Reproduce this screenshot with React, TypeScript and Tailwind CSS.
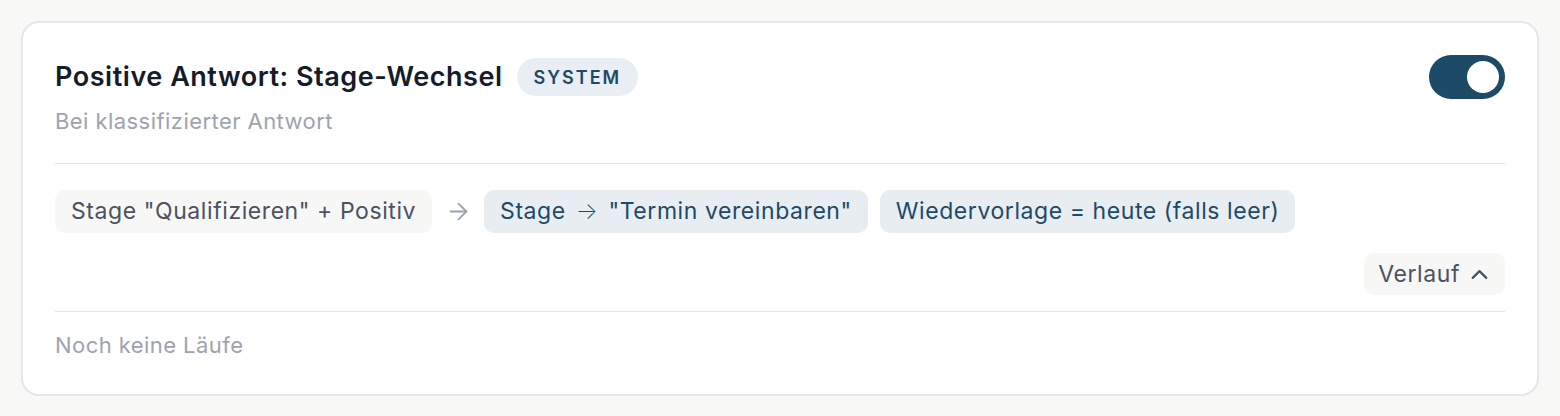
import { ArrowRight, ChevronUp } from 'lucide-react';

export default function App() {
    return (
        <div className="min-h-screen bg-[#f8f8f6] p-[21px] font-['Inter','Noto_Sans',sans-serif]">
            <div className="rounded-[18px] border-2 border-[#e6e6eb] bg-white px-8 pt-8 pb-[34px]">
                {/* header */}
                <div className="flex items-start justify-between border-b border-[#e4e4e9] pb-[27px]">
                    <div className="flex flex-col">
                        <div className="flex h-10 items-center gap-[14px]">
                            <h1 className="pt-1 text-[27px] leading-[36px] font-semibold tracking-[0.02em] text-[#141b2b]">
                                Positive Antwort: Stage-Wechsel
                            </h1>
                            <span className="mt-1 flex h-[38px] items-center rounded-full bg-[#e8eef3] px-[17px] text-[18px] font-semibold tracking-[0.11em] text-[#1e4a66]">
                                SYSTEM
                            </span>
                        </div>
                        <p className="mt-[11px] text-[22px] leading-[30px] tracking-[0.02em] text-[#9da3b0]">Bei klassifizierter Antwort</p>
                    </div>
                    <button className="flex h-11 w-[76px] items-center justify-end rounded-full bg-[#1d4a67] px-1.5">
                        <span className="h-8 w-8 rounded-full bg-white" />
                    </button>
                </div>

                {/* actions */}
                <div className="mt-[26px] flex items-center gap-3 text-[23px] leading-[31px] tracking-[0.025em]">
                    <span className="rounded-[10px] bg-[#f7f7f5] px-4 py-1.5 text-[#4b5263]">
                        Stage "Qualifizieren" + Positiv
                    </span>
                    <span className="flex w-7 justify-center text-[#9ca3af]">
                        <ArrowRight size={27} strokeWidth={1.6} />
                    </span>
                    <span className="rounded-[10px] bg-[#e8edf2] px-4 py-1.5 text-[#1d4a66]">
                        Stage <span className="mx-[3px] font-extralight">→</span> "Termin vereinbaren"
                    </span>
                    <span className="rounded-[10px] bg-[#e8edf2] px-4 py-1.5 text-[#1d4a66]">
                        Wiedervorlage = heute (falls leer)
                    </span>
                </div>

                <div className="mt-5 flex justify-end">
                    <button className="flex items-center gap-1.5 rounded-[10px] bg-[#f7f7f5] pl-3.5 pr-3 py-1.5 text-[23px] leading-[30px] tracking-[0.025em] text-[#4b5263]">
                        Verlauf
                        <ChevronUp size={27} strokeWidth={2} />
                    </button>
                </div>

                <div className="mt-4 border-t border-[#e4e4e9] pt-[18px]">
                    <p className="text-[22px] leading-[30px] tracking-[0.02em] text-[#9da3b0]">Noch keine Läufe</p>
                </div>
            </div>
        </div>
    );
}
